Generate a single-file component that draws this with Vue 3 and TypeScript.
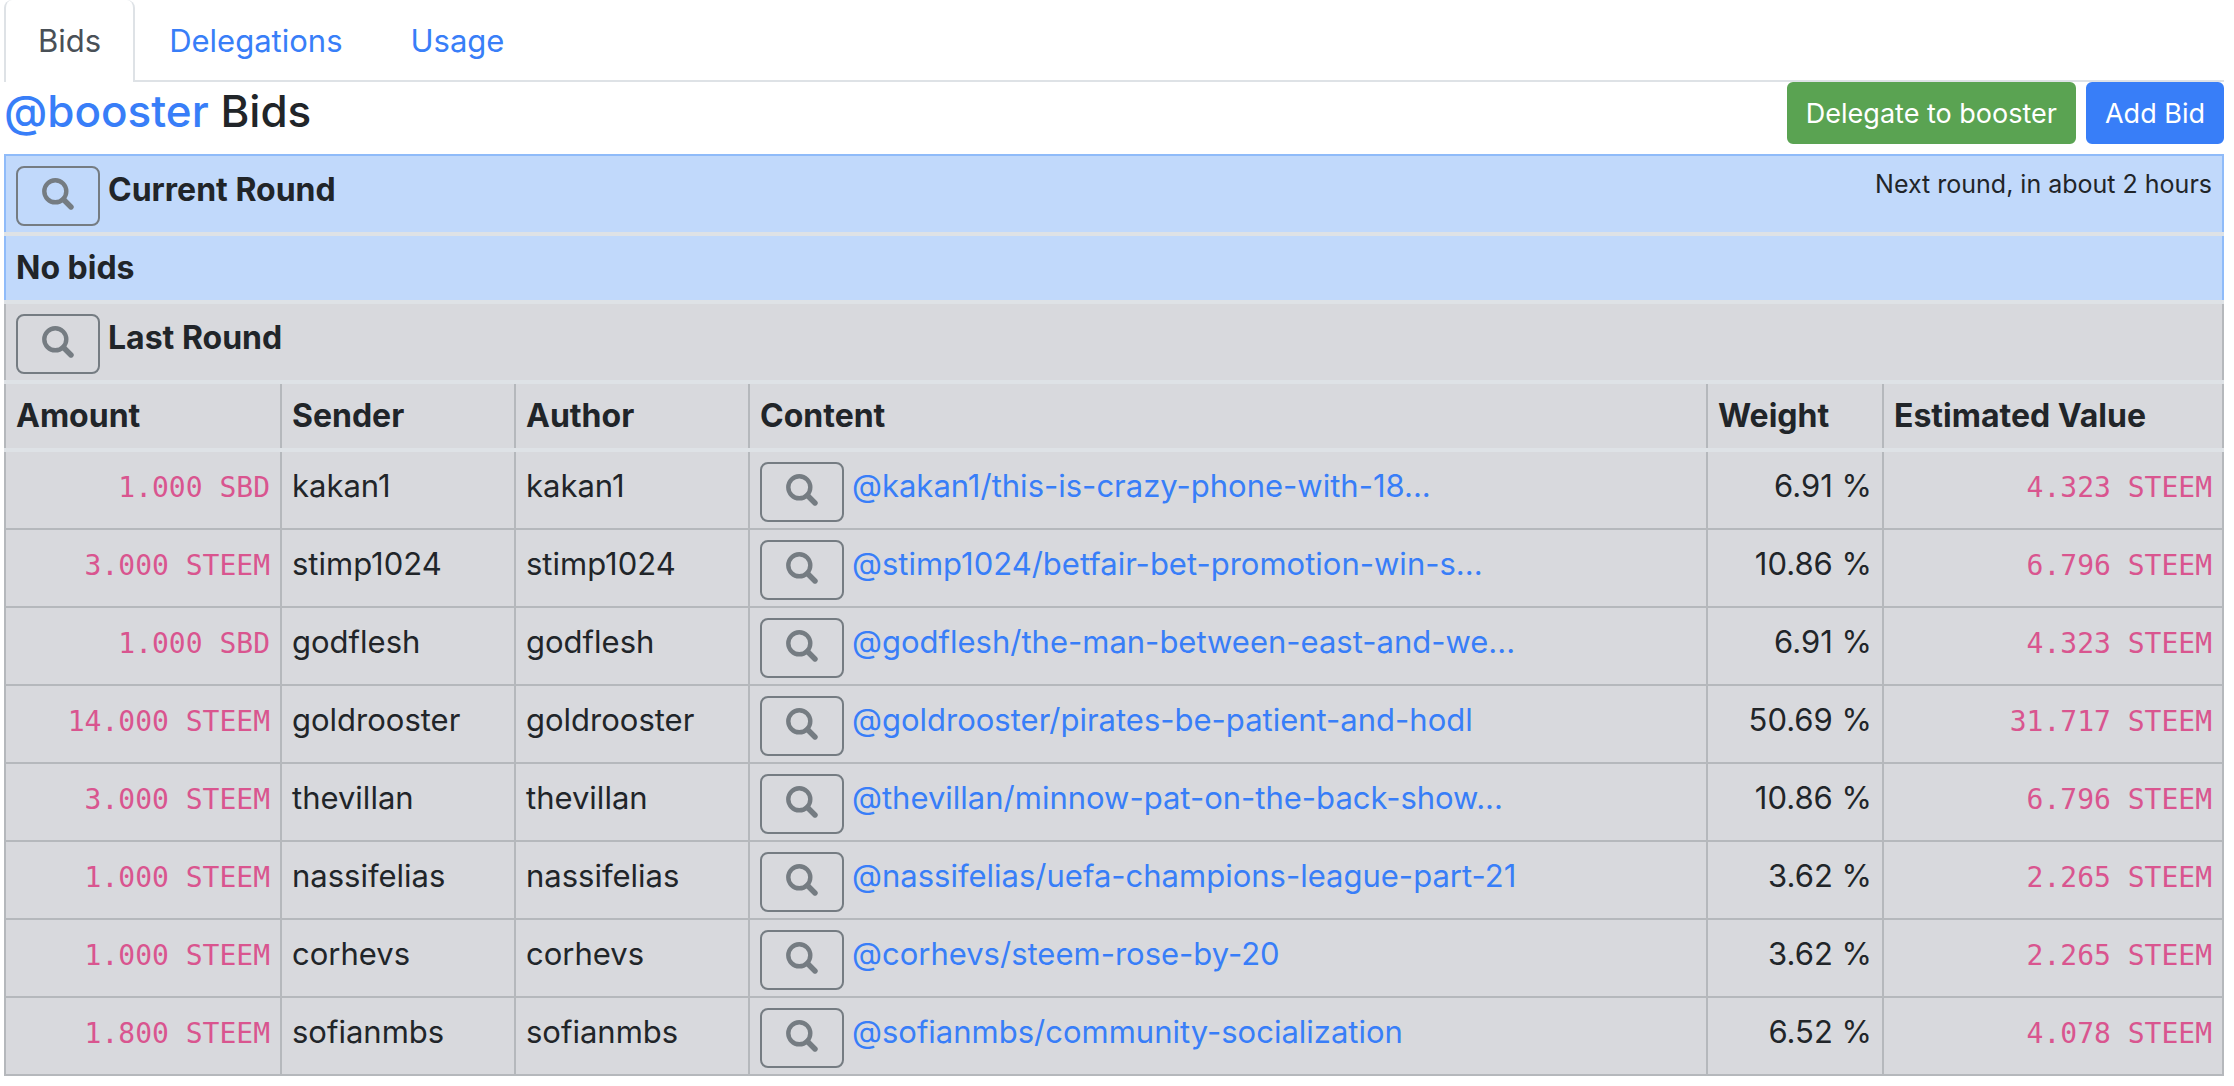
<script setup lang="ts">
import { h } from 'vue'

interface Bid {
  amount: string
  account: string
  content: string
  weight: string
  value: string
}

const bids: Bid[] = [
  { amount: '1.000 SBD', account: 'kakan1', content: '@kakan1/this-is-crazy-phone-with-18...', weight: '6.91 %', value: '4.323 STEEM' },
  { amount: '3.000 STEEM', account: 'stimp1024', content: '@stimp1024/betfair-bet-promotion-win-s...', weight: '10.86 %', value: '6.796 STEEM' },
  { amount: '1.000 SBD', account: 'godflesh', content: '@godflesh/the-man-between-east-and-we...', weight: '6.91 %', value: '4.323 STEEM' },
  { amount: '14.000 STEEM', account: 'goldrooster', content: '@goldrooster/pirates-be-patient-and-hodl', weight: '50.69 %', value: '31.717 STEEM' },
  { amount: '3.000 STEEM', account: 'thevillan', content: '@thevillan/minnow-pat-on-the-back-show...', weight: '10.86 %', value: '6.796 STEEM' },
  { amount: '1.000 STEEM', account: 'nassifelias', content: '@nassifelias/uefa-champions-league-part-21', weight: '3.62 %', value: '2.265 STEEM' },
  { amount: '1.000 STEEM', account: 'corhevs', content: '@corhevs/steem-rose-by-20', weight: '3.62 %', value: '2.265 STEEM' },
  { amount: '1.800 STEEM', account: 'sofianmbs', content: '@sofianmbs/community-socialization', weight: '6.52 %', value: '4.078 STEEM' },
]

const SearchIcon = () =>
  h('svg', { width: 32, height: 32, viewBox: '0 0 32 32', fill: 'none', stroke: 'currentColor', 'aria-hidden': 'true' }, [
    h('circle', { cx: 13.3, cy: 13.3, r: 11, 'stroke-width': 4.4 }),
    h('path', { d: 'M21.5 21.5L29 29', 'stroke-width': 5.4, 'stroke-linecap': 'round' }),
  ])
</script>

<template>
  <main class="page">
    <nav class="tabs">
      <a class="tab active" href="#bids">Bids</a>
      <a class="tab" href="#delegations">Delegations</a>
      <a class="tab" href="#usage">Usage</a>
    </nav>

    <header class="heading">
      <h1><a href="#booster">@booster</a> Bids</h1>
      <div class="actions">
        <button type="button" class="btn green">Delegate to booster</button>
        <button type="button" class="btn blue">Add Bid</button>
      </div>
    </header>

    <table class="rounds">
      <colgroup>
        <col class="c-amount" />
        <col class="c-name" />
        <col class="c-name" />
        <col />
        <col class="c-weight" />
        <col class="c-value" />
      </colgroup>
      <thead class="current">
        <tr>
          <th colspan="6">
            <div class="round">
              <button type="button" class="search" aria-label="Search current round"><SearchIcon /></button>
              <span>Current Round</span>
              <small>Next round, in about 2 hours</small>
            </div>
          </th>
        </tr>
        <tr class="labels"><th colspan="6">No bids</th></tr>
      </thead>
      <tbody class="last">
        <tr>
          <th colspan="6">
            <div class="round">
              <button type="button" class="search" aria-label="Search last round"><SearchIcon /></button>
              <span>Last Round</span>
            </div>
          </th>
        </tr>
        <tr class="labels">
          <th scope="col">Amount</th>
          <th scope="col">Sender</th>
          <th scope="col">Author</th>
          <th scope="col">Content</th>
          <th scope="col">Weight</th>
          <th scope="col">Estimated Value</th>
        </tr>
        <tr v-for="bid in bids" :key="bid.account">
          <td class="num"><code>{{ bid.amount }}</code></td>
          <td>{{ bid.account }}</td>
          <td>{{ bid.account }}</td>
          <td>
            <div class="round">
              <button type="button" class="search" :aria-label="`Search ${bid.content}`"><SearchIcon /></button>
              <a href="#content">{{ bid.content }}</a>
            </div>
          </td>
          <td class="num">{{ bid.weight }}</td>
          <td class="num"><code>{{ bid.value }}</code></td>
        </tr>
      </tbody>
    </table>
  </main>
</template>

<style>
body {
  margin: 0;
  background: #fff;
}
</style>

<style scoped>
.page {
  padding: 0 10px 10px 4px;
  font-family: Inter, "Liberation Sans", sans-serif;
  font-size: 31px;
  line-height: 48px;
  color: #212529;
}

a {
  color: #387ef8;
  text-decoration: none;
}

.tabs {
  display: flex;
  border-bottom: 2px solid #dee2e6;
}

.tab {
  margin-bottom: -2px;
  padding: 17px 32px;
  border: 2px solid transparent;
  border-top: 0;
  border-bottom: 0;
  border-radius: 8px 8px 0 0;
}

.tab.active {
  color: #495057;
  background: #fff;
  border-color: #dee2e6;
}

.heading {
  display: flex;
  justify-content: space-between;
  align-items: flex-start;
  height: 72px;
}

h1 {
  margin: 0;
  font-size: 44px;
  font-weight: 500;
  line-height: 58px;
}

.actions {
  display: flex;
  gap: 10px;
}

.btn {
  padding: 9px 17px 7px;
  border: 2px solid;
  border-radius: 6px;
  font-family: inherit;
  font-size: 27px;
  line-height: 42px;
  color: #fff;
}

.green {
  background: #5aa352;
  border-color: #5aa352;
}

.blue {
  background: #387ef8;
  border-color: #387ef8;
}

.rounds {
  width: 100%;
  table-layout: fixed;
  border-collapse: collapse;
}

.c-amount { width: 276px; }
.c-name { width: 234px; }
.c-weight { width: 176px; }
.c-value { width: 340px; }

th,
td {
  padding: 10px 10px 6px;
  border: 2px solid #b5b8bc;
  text-align: left;
  vertical-align: top;
}

th {
  font-size: 32px;
  font-weight: 700;
  border-bottom: 4px solid #dee2e6;
}

.current th {
  background: #c1d9fb;
  border-color: #8fbbf9;
  border-bottom-color: #dee2e6;
}

.last th,
.last td {
  background: #d8d9dd;
}

.labels th {
  padding: 8px 10px;
}

.num {
  text-align: right;
}

.round {
  display: flex;
  align-items: flex-start;
  gap: 8px;
}

.search {
  display: flex;
  flex: none;
  justify-content: center;
  width: 84px;
  height: 60px;
  padding: 10px 0;
  border: 2px solid #757c82;
  border-radius: 8px;
  background: transparent;
  color: #757c82;
}

small {
  margin-left: auto;
  font-size: 25px;
  font-weight: 400;
  line-height: 36px;
}

code {
  font-family: "DejaVu Sans Mono", "Liberation Mono", monospace;
  font-size: 28px;
  color: #d9558f;
}
</style>
